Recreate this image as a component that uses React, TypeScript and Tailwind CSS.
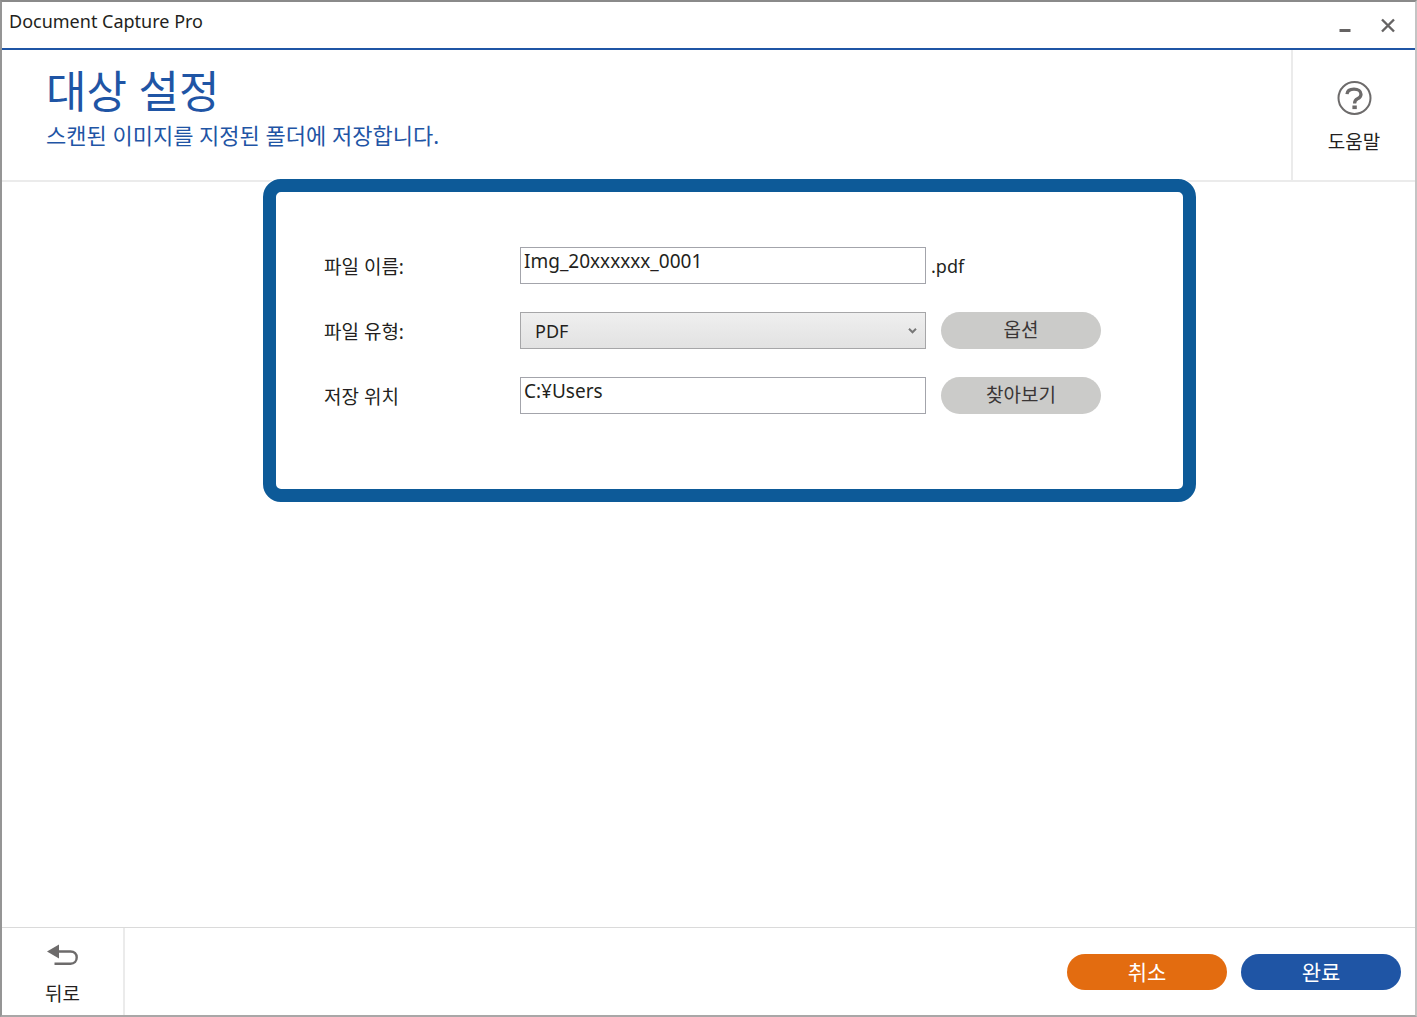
import React, { useState } from 'react';

const fieldClass =
  'block h-[37px] w-full border border-[#a3a4ab] bg-white pb-[10px] pl-[3px] text-[19px] leading-6 text-[#231f20] outline-none focus:border-[#1f55a5]';

const optionButtonClass =
  'ml-[15px] h-[37px] rounded-full bg-[#cbcbc9] text-[19px] text-[#3a3636] hover:bg-[#bdbdbb]';

const actionButtonClass = 'h-9 w-40 rounded-full text-[21px] leading-9 text-white';

function HelpIcon() {
  return (
    <svg width="36" height="36" viewBox="0 0 36 36" fill="none" stroke="#6d6b6b" aria-hidden="true">
      <circle cx="18.500" cy="18" r="16" strokeWidth="2" />
      <path d="M11 14.200c.3-3.200 3.100-5 7-5 4.200 0 7 1.900 7 5 0 2.300-1.400 3.600-3.500 4.600-2.100 1-2.900 2.100-2.900 4.700" strokeWidth="3.300" />
      <path d="M16.400 27.300h4.400" strokeWidth="3.600" />
    </svg>
  );
}

function BackIcon() {
  return (
    <svg width="32" height="22" viewBox="0 0 32 22" fill="none" aria-hidden="true">
      <path d="M0 7.500 12 0.500v14z" fill="#6d6b6b" />
      <path d="M11 7.500h12.500c3.900 0 6.200 2.500 6.200 6s-2.300 6.200-6.200 6.200H7.500" stroke="#6d6b6b" strokeWidth="2.400" />
    </svg>
  );
}

export default function App() {
  const [fileName, setFileName] = useState<string>('Img_20xxxxxx_0001');
  const [fileType, setFileType] = useState<string>('PDF');
  const [folder, setFolder] = useState<string>('C:¥Users');

  return (
    <div className="flex min-h-screen flex-col border-2 border-t-[#8a8a8a] border-r-[#c4c4c4] border-b-[#a9a7a7] border-l-[#959595] bg-white font-['Noto_Sans','Noto_Sans_CJK_KR',sans-serif] text-[#231f20]">
      <div className="flex h-12 items-start justify-between border-b-2 border-[#1f55a5] pl-[7px] pr-[18px]">
        <span className="pt-[7px] text-lg leading-6">Document Capture Pro</span>
        <div className="flex gap-7 pt-4">
          <button type="button" aria-label="최소화" className="flex h-4 items-center">
            <svg width="16" height="16" viewBox="0 0 16 16" stroke="#656363" strokeWidth="3" aria-hidden="true">
              <path d="M2.500 12.500h11" />
            </svg>
          </button>
          <button type="button" aria-label="닫기" className="flex h-4 items-center">
            <svg width="16" height="16" viewBox="0 0 16 16" stroke="#656363" strokeWidth="2.400" aria-hidden="true">
              <path d="M1 1.500l12 12M13 1.500l-12 12" />
            </svg>
          </button>
        </div>
      </div>

      <header className="flex h-[132px] justify-between border-b-2 border-[#ebebeb]">
        <div className="pl-11 pt-4 text-[#1f55a5]">
          <h1 className="text-[44px] leading-[50px]">대상 설정</h1>
          <p className="text-[22px] leading-[38px]">스캔된 이미지를 지정된 폴더에 저장합니다.</p>
        </div>
        <button
          type="button"
          className="flex w-[124px] flex-col items-center gap-[14px] border-l-2 border-[#ebebeb] pt-[30px] text-[19px] leading-6"
        >
          <HelpIcon />
          도움말
        </button>
      </header>

      <main className="flex-1">
        <form
          onSubmit={(e) => e.preventDefault()}
          className="-mt-[3px] ml-[261px] mr-[219px] rounded-[18px] border-[13px] border-[#0d5a98] bg-white pt-[55px] pr-[82px] pb-[75px] pl-12 shadow-[0_0_0_1px_white]"
        >
          <div className="grid grid-cols-[196px_1fr_175px] items-center gap-y-7 text-[19px]">
            <label htmlFor="fileName" className="pt-[3px]">파일 이름:</label>
            <input
              id="fileName"
              type="text"
              value={fileName}
              onChange={(e) => setFileName(e.target.value)}
              className={fieldClass}
            />
            <span className="pl-[5px] text-lg">.pdf</span>

            <label htmlFor="fileType" className="pt-[3px]">파일 유형:</label>
            <div className="relative">
              <select
                id="fileType"
                value={fileType}
                onChange={(e) => setFileType(e.target.value)}
                className="block h-[37px] w-full appearance-none border border-[#a6a6a8] bg-linear-to-b from-[#efefef] to-[#e2e2e2] pl-[14px] text-lg"
              >
                <option value="PDF">PDF</option>
                <option value="JPEG">JPEG</option>
              </select>
              <svg
                className="pointer-events-none absolute top-1/2 right-[9px] -translate-y-1/2"
                width="9"
                height="7"
                viewBox="0 0 9 7"
                fill="none"
                stroke="#777"
                strokeWidth="2"
                aria-hidden="true"
              >
                <path d="M1 1.200 4.500 4.800 8 1.200" />
              </svg>
            </div>
            <button type="button" className={optionButtonClass}>옵션</button>

            <label htmlFor="folder" className="pt-[3px]">저장 위치</label>
            <input
              id="folder"
              type="text"
              value={folder}
              onChange={(e) => setFolder(e.target.value)}
              className={fieldClass}
            />
            <button type="button" className={optionButtonClass}>찾아보기</button>
          </div>
        </form>
      </main>

      <footer className="flex h-[88px] items-stretch justify-between border-t border-[#dadada]">
        <button
          type="button"
          className="flex w-[123px] flex-col items-center gap-4 border-r-2 border-[#ebebeb] pt-4 text-[19px] leading-6"
        >
          <BackIcon />
          뒤로
        </button>
        <div className="flex items-center gap-[14px] pr-[14px]">
          <button type="button" className={`${actionButtonClass} bg-[#e36c10] hover:bg-[#cf610d]`}>취소</button>
          <button type="button" className={`${actionButtonClass} bg-[#1f55a5] hover:bg-[#1a488c]`}>완료</button>
        </div>
      </footer>
    </div>
  );
}
